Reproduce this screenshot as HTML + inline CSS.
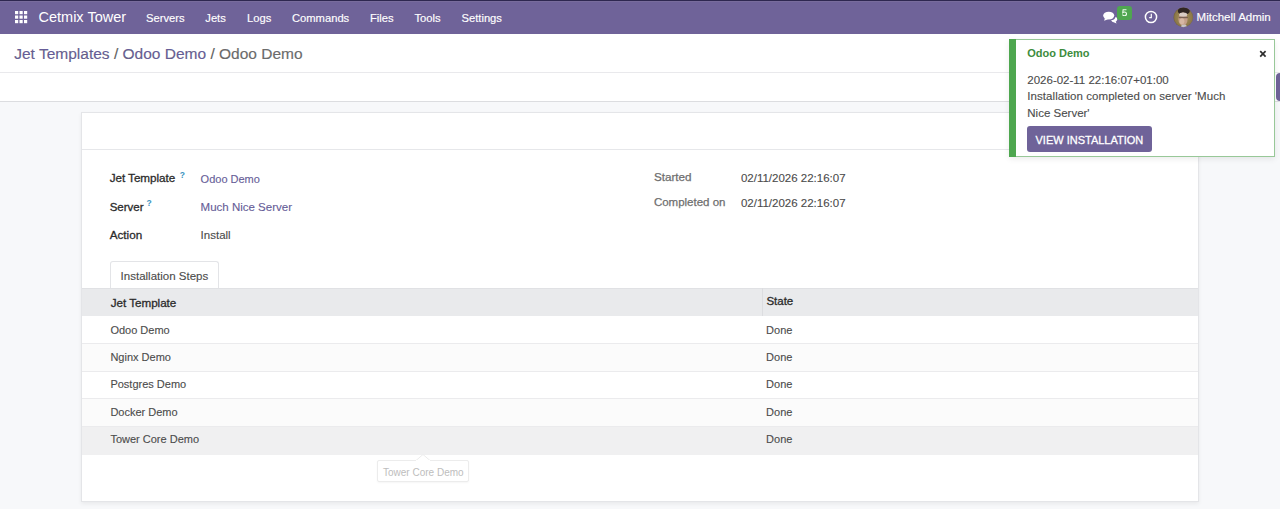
<!DOCTYPE html>
<html><head><meta charset="utf-8"><style>
html,body{margin:0;padding:0;width:1280px;height:509px;overflow:hidden;background:#f7f8fa;}
body{position:relative;font-family:'Liberation Sans', sans-serif;}
.t{position:absolute;white-space:nowrap;line-height:1;font-family:'Liberation Sans', sans-serif;}
.r{position:absolute;}
</style></head><body>
<div class="r" style="left:0px;top:0px;width:1280px;height:34px;background:#6f6399;"></div>
<div class="r" style="left:0px;top:0px;width:1280px;height:1px;background:#2e2750;"></div>
<div class="r" style="left:0px;top:1px;width:1280px;height:1px;background:#786c9c;"></div>
<div class="r" style="left:0px;top:34px;width:1280px;height:67px;background:#fff;"></div>
<div class="r" style="left:0px;top:72px;width:1280px;height:1px;background:#e9e9ec;"></div>
<div class="r" style="left:0px;top:101px;width:1280px;height:1px;background:#dcdde0;"></div>
<div class="r" style="left:0px;top:102px;width:1280px;height:407px;background:#f7f8fa;"></div>
<div class="r" style="left:1275.5px;top:73px;width:30px;height:27.5px;background:#6f6399;border-radius:4px;"></div>
<svg class="r" style="left:15px;top:11px" width="13" height="13" viewBox="0 0 13 13"><rect x="0.0" y="0.0" width="3.2" height="3.2" fill="#fff"/><rect x="4.5" y="0.0" width="3.2" height="3.2" fill="#fff"/><rect x="9.0" y="0.0" width="3.2" height="3.2" fill="#fff"/><rect x="0.0" y="4.5" width="3.2" height="3.2" fill="#fff"/><rect x="4.5" y="4.5" width="3.2" height="3.2" fill="#fff"/><rect x="9.0" y="4.5" width="3.2" height="3.2" fill="#fff"/><rect x="0.0" y="9.0" width="3.2" height="3.2" fill="#fff"/><rect x="4.5" y="9.0" width="3.2" height="3.2" fill="#fff"/><rect x="9.0" y="9.0" width="3.2" height="3.2" fill="#fff"/></svg>
<div class="t" style="left:38.5px;top:10px;font-size:14.5px;color:#fff;">Cetmix Tower</div>
<div class="t" style="left:146px;top:13px;font-size:11.2px;color:#fff;-webkit-text-stroke:0.15px #fff;">Servers</div>
<div class="t" style="left:205.3px;top:13px;font-size:11.2px;color:#fff;-webkit-text-stroke:0.15px #fff;">Jets</div>
<div class="t" style="left:247px;top:13px;font-size:11.2px;color:#fff;-webkit-text-stroke:0.15px #fff;">Logs</div>
<div class="t" style="left:292px;top:13px;font-size:11.2px;color:#fff;-webkit-text-stroke:0.15px #fff;">Commands</div>
<div class="t" style="left:370px;top:13px;font-size:11.2px;color:#fff;-webkit-text-stroke:0.15px #fff;">Files</div>
<div class="t" style="left:414.4px;top:13px;font-size:11.2px;color:#fff;-webkit-text-stroke:0.15px #fff;">Tools</div>
<div class="t" style="left:461.5px;top:13px;font-size:11.2px;color:#fff;-webkit-text-stroke:0.15px #fff;">Settings</div>
<svg class="r" style="left:1103.4px;top:10.8px" width="15.6" height="12.9" viewBox="0.3 0.3 16.5 14">
<ellipse cx="6.3" cy="5.3" rx="6" ry="4.3" fill="#fff"/>
<path d="M2.2 8 L1.3 11 L5.5 9.2 Z" fill="#fff"/>
<path d="M9 10.2 C11.5 10.2 13.5 8.6 13.8 6.5 C15 7.2 15.6 8.2 15.6 9.2 C15.6 10.3 14.9 11.2 13.9 11.8 L14.8 14 L11.6 12.6 C10.6 12.6 9.6 11.8 9 10.2 Z" fill="#fff"/>
</svg>
<div class="r" style="left:1116.6px;top:5.8px;width:15px;height:14.3px;background:#4fa650;border-radius:3px;"></div>
<svg class="r" style="left:1121.6px;top:8.8px" width="5.2" height="7.1" viewBox="0 0 6 8"><path d="M5.2 0.8 H1.3 L0.9 4 C1.4 3.5 2 3.3 2.8 3.3 C4.2 3.3 5.2 4.2 5.2 5.5 C5.2 6.9 4.1 7.7 2.8 7.7 C1.7 7.7 0.9 7.2 0.6 6.3" fill="none" stroke="#effbef" stroke-width="1.25"/></svg>
<svg class="r" style="left:1144px;top:10px" width="14" height="14" viewBox="0 0 14 14">
<circle cx="7" cy="7" r="5.6" fill="none" stroke="#fff" stroke-width="1.5"/>
<path d="M7.3 3.8 V7.6 H5.2" fill="none" stroke="#fff" stroke-width="1.2"/>
</svg>
<svg class="r" style="left:1173px;top:6.5px;filter:blur(0.45px)" width="21" height="21" viewBox="0 0 21 21">
<defs><clipPath id="av"><circle cx="10.3" cy="10.4" r="9.8"/></clipPath>
<radialGradient id="bgg" cx="50%" cy="50%" r="55%"><stop offset="0" stop-color="#a8935f"/><stop offset="0.75" stop-color="#8c7849"/><stop offset="1" stop-color="#544630"/></radialGradient></defs>
<g clip-path="url(#av)">
<rect x="0" y="0" width="21" height="21" fill="url(#bgg)"/>
<ellipse cx="10.8" cy="4" rx="6" ry="3.8" fill="#2f2522"/>
<ellipse cx="10" cy="12" rx="4.6" ry="6.6" fill="#c4a08a"/>
<ellipse cx="10.2" cy="7.6" rx="4" ry="2.2" fill="#d9ccc4"/>
<rect x="5.8" y="9.8" width="9" height="1.4" fill="#5a463e" opacity="0.7"/>
<ellipse cx="9" cy="14.2" rx="2.4" ry="3" fill="#d6b7a3"/>
<path d="M7.5 21 L8.8 17.8 L13 17.8 L14.5 21 Z" fill="#c6c4c6"/>
</g></svg>
<div class="t" style="left:1196.6px;top:12px;font-size:11.5px;color:#fff;-webkit-text-stroke:0.15px #fff;">Mitchell Admin</div>
<div class="t" style="left:14.25px;top:45.75px;font-size:15.5px;color:#5f5f5f;-webkit-text-stroke:0.15px #5f5f5f;"><span style="color:#665d98">Jet Templates</span> / <span style="color:#665d98">Odoo Demo</span> / <span style="color:#6c6c6c">Odoo Demo</span></div>
<div class="r" style="left:81px;top:112px;width:1116px;height:388px;background:#fff;border:1px solid #e4e5e8;box-shadow:0 2px 4px rgba(0,0,0,.06);"></div>
<div class="r" style="left:82px;top:149px;width:1116px;height:1px;background:#e6e7ea;"></div>
<div class="t" style="left:109.7px;top:172px;font-size:11.7px;color:#2b2b2b;-webkit-text-stroke:0.3px #2b2b2b;letter-spacing:-0.05px;">Jet Template</div>
<div class="t" style="left:179.8px;top:171px;font-size:8.5px;color:#3d93c0;font-weight:bold;">?</div>
<div class="t" style="left:200.6px;top:174px;font-size:11px;color:#665d98;-webkit-text-stroke:0.12px #665d98;">Odoo Demo</div>
<div class="t" style="left:109.7px;top:202px;font-size:11.5px;color:#2b2b2b;-webkit-text-stroke:0.3px #2b2b2b;">Server</div>
<div class="t" style="left:146.5px;top:199px;font-size:8.5px;color:#3d93c0;font-weight:bold;">?</div>
<div class="t" style="left:200.6px;top:202px;font-size:11.5px;color:#665d98;-webkit-text-stroke:0.12px #665d98;">Much Nice Server</div>
<div class="t" style="left:109.7px;top:229px;font-size:11.7px;color:#2b2b2b;-webkit-text-stroke:0.3px #2b2b2b;">Action</div>
<div class="t" style="left:200.6px;top:230px;font-size:11.5px;color:#4c4c4c;-webkit-text-stroke:0.12px #4c4c4c;">Install</div>
<div class="t" style="left:653.9px;top:171px;font-size:11.7px;color:#6e6e6e;-webkit-text-stroke:0.25px #6e6e6e;">Started</div>
<div class="t" style="left:740.9px;top:173px;font-size:11.5px;color:#4c4c4c;-webkit-text-stroke:0.12px #4c4c4c;">02/11/2026 22:16:07</div>
<div class="t" style="left:653.9px;top:197px;font-size:11.5px;color:#6e6e6e;-webkit-text-stroke:0.25px #6e6e6e;">Completed on</div>
<div class="t" style="left:740.9px;top:198px;font-size:11.5px;color:#4c4c4c;-webkit-text-stroke:0.12px #4c4c4c;">02/11/2026 22:16:07</div>
<div class="r" style="left:109.8px;top:260.8px;width:109.6px;height:28px;background:#fff;border:1px solid #e3e4e7;border-bottom:none;border-radius:3px 3px 0 0;box-sizing:border-box;"></div>
<div class="t" style="left:120.6px;top:271px;font-size:11.5px;color:#4c4c4c;-webkit-text-stroke:0.12px #4c4c4c;">Installation Steps</div>
<div class="r" style="left:82px;top:288px;width:1116px;height:28px;background:#e9eaec;"></div>
<div class="r" style="left:82px;top:288px;width:1116px;height:1px;background:#e0e1e4;"></div>
<div class="r" style="left:762px;top:288px;width:1px;height:28px;background:#dcdde0;"></div>
<div class="t" style="left:110.8px;top:297px;font-size:11.7px;color:#2b2b2b;-webkit-text-stroke:0.3px #2b2b2b;letter-spacing:-0.05px;">Jet Template</div>
<div class="t" style="left:766.4px;top:296px;font-size:11.5px;color:#2b2b2b;-webkit-text-stroke:0.3px #2b2b2b;">State</div>
<div class="r" style="left:82px;top:316px;width:1116px;height:27px;background:#fff;"></div>
<div class="t" style="left:110.4px;top:325px;font-size:11px;color:#4c4c4c;-webkit-text-stroke:0.12px #4c4c4c;">Odoo Demo</div>
<div class="t" style="left:766.1px;top:325px;font-size:11px;color:#4c4c4c;-webkit-text-stroke:0.12px #4c4c4c;">Done</div>
<div class="r" style="left:82px;top:343px;width:1116px;height:28px;background:#fbfbfb;"></div>
<div class="t" style="left:110.4px;top:352px;font-size:11px;color:#4c4c4c;-webkit-text-stroke:0.12px #4c4c4c;">Nginx Demo</div>
<div class="t" style="left:766.1px;top:352px;font-size:11px;color:#4c4c4c;-webkit-text-stroke:0.12px #4c4c4c;">Done</div>
<div class="r" style="left:82px;top:371px;width:1116px;height:27px;background:#fff;"></div>
<div class="t" style="left:110.4px;top:379px;font-size:11px;color:#4c4c4c;-webkit-text-stroke:0.12px #4c4c4c;">Postgres Demo</div>
<div class="t" style="left:766.1px;top:379px;font-size:11px;color:#4c4c4c;-webkit-text-stroke:0.12px #4c4c4c;">Done</div>
<div class="r" style="left:82px;top:398px;width:1116px;height:28px;background:#fbfbfb;"></div>
<div class="t" style="left:110.4px;top:407px;font-size:11px;color:#4c4c4c;-webkit-text-stroke:0.12px #4c4c4c;">Docker Demo</div>
<div class="t" style="left:766.1px;top:407px;font-size:11px;color:#4c4c4c;-webkit-text-stroke:0.12px #4c4c4c;">Done</div>
<div class="r" style="left:82px;top:426px;width:1116px;height:28.5px;background:#f0f0f1;"></div>
<div class="t" style="left:110.4px;top:434px;font-size:11px;color:#4c4c4c;-webkit-text-stroke:0.12px #4c4c4c;">Tower Core Demo</div>
<div class="t" style="left:766.1px;top:434px;font-size:11px;color:#4c4c4c;-webkit-text-stroke:0.12px #4c4c4c;">Done</div>
<div class="r" style="left:82px;top:343px;width:1116px;height:1px;background:#ebebed;"></div>
<div class="r" style="left:82px;top:371px;width:1116px;height:1px;background:#ebebed;"></div>
<div class="r" style="left:82px;top:398px;width:1116px;height:1px;background:#ebebed;"></div>
<div class="r" style="left:82px;top:426px;width:1116px;height:1px;background:#ebebed;"></div>
<div class="r" style="left:376.5px;top:459.7px;width:92px;height:22.3px;background:#fff;border:1px solid #ececec;border-radius:2px;box-sizing:border-box;box-shadow:0 1px 2px rgba(0,0,0,.04)"></div>
<svg class="r" style="left:416px;top:454px" width="14" height="7" viewBox="0 0 14 7"><path d="M0 6.5 L7 0.5 L14 6.5" fill="#fff" stroke="#ececec" stroke-width="1"/><rect x="0" y="6" width="14" height="2" fill="#fff"/></svg>
<div class="t" style="left:383px;top:468px;font-size:10px;color:#bdbdbd;">Tower Core Demo</div>
<div class="r" style="left:1009px;top:39px;width:266px;height:118px;background:#fff;border:1px solid #98c898;box-sizing:border-box;box-shadow:0 2px 6px rgba(0,0,0,.08);"></div>
<div class="r" style="left:1009px;top:39px;width:7.3px;height:118px;background:#4ea74f;"></div>
<div class="t" style="left:1027.2px;top:48px;font-size:11px;color:#3d8c3d;font-weight:bold;">Odoo Demo</div>
<svg class="r" style="left:1258.5px;top:50px" width="8" height="8" viewBox="0 0 8 8"><path d="M1.2 1.2 L6.6 6.6 M6.6 1.2 L1.2 6.6" stroke="#2e2e2e" stroke-width="1.7"/></svg>
<div class="t" style="left:1027.3px;top:75px;font-size:11.5px;color:#4c4c4c;-webkit-text-stroke:0.12px #4c4c4c;">2026-02-11 22:16:07+01:00</div>
<div class="t" style="left:1027.3px;top:91px;font-size:11.5px;color:#4c4c4c;-webkit-text-stroke:0.12px #4c4c4c;letter-spacing:0.06px;">Installation completed on server 'Much</div>
<div class="t" style="left:1027.3px;top:108px;font-size:11.5px;color:#4c4c4c;-webkit-text-stroke:0.12px #4c4c4c;">Nice Server'</div>
<div class="r" style="left:1026.7px;top:126.2px;width:125.3px;height:25.5px;background:#6f6399;border-radius:3px;"></div>
<div class="t" style="left:1035.5px;top:135px;font-size:11px;color:#fff;-webkit-text-stroke:0.28px #fff;">VIEW INSTALLATION</div>
</body></html>
